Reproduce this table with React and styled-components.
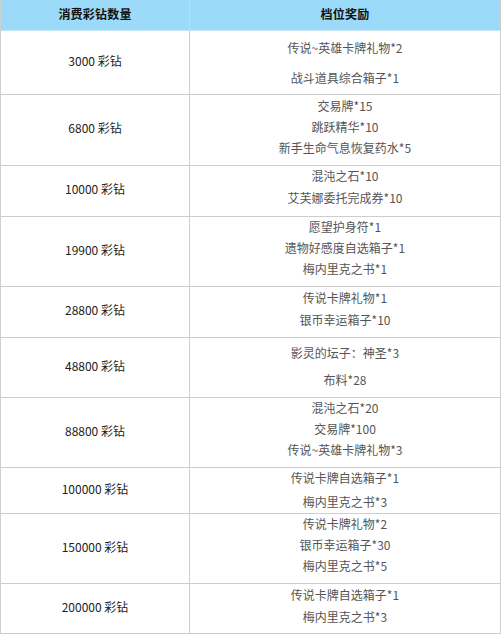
import React from 'react';
import styled, {createGlobalStyle} from 'styled-components';

const GlobalStyle = createGlobalStyle`
    html, body {
        margin: 0;
        padding: 0;
        background: #FFFFFF;
    }
    body {
        font-family: "Noto Sans CJK SC", "Noto Sans", sans-serif;
        font-size: 12px;
    }
`;

const Table = styled.div`
    width: 501px;
    box-sizing: border-box;
    border-left: 1px solid #cfcfcf;
    border-right: 1px solid #cfcfcf;
`;

const HeaderRow = styled.div`
    display: grid;
    grid-template-columns: 189px 1fr;
    height: 31px;
    background: #9bdaf8;
    border-bottom: 1px solid #c4e6f5;
    box-sizing: border-box;
`;

const HeaderCell = styled.div`
    display: flex;
    align-items: center;
    justify-content: center;
    padding-bottom: 3px;
    font-weight: 700;
    color: #111;
    letter-spacing: 0.2px;
    border-right: ${p => p.$divider ? '1px solid #b3e2f7' : 'none'};
`;

const Row = styled.div`
    display: grid;
    grid-template-columns: 189px 1fr;
    box-sizing: border-box;
    border-bottom: 1px solid #cdcdcd;
`;

const AmountCell = styled.div`
    display: flex;
    align-items: center;
    justify-content: center;
    padding-bottom: 5px;
    color: #222;
    border-right: 1px solid #cdcdcd;
`;

const RewardCell = styled.div`
    display: flex;
    flex-direction: column;
    align-items: center;
    color: #555;
`;

const Item = styled.div`
    line-height: 20px;
    white-space: nowrap;
`;

const rows = [
    {amount: '3000', h: 64, pt: 7, gap: 10, items: ['传说~英雄卡牌礼物*2', '战斗道具综合箱子*1']},
    {amount: '6800', h: 71, pt: 1, gap: 1, items: ['交易牌*15', '跳跃精华*10', '新手生命气息恢复药水*5']},
    {amount: '10000', h: 51, pt: 0, gap: 2, items: ['混沌之石*10', '艾芙娜委托完成券*10']},
    {amount: '19900', h: 70, pt: 0, gap: 1, items: ['愿望护身符*1', '遗物好感度自选箱子*1', '梅内里克之书*1']},
    {amount: '28800', h: 51, pt: 1, gap: 2, items: ['传说卡牌礼物*1', '银币幸运箱子*10']},
    {amount: '48800', h: 60, pt: 5, gap: 7, items: ['影灵的坛子：神圣*3', '布料*28']},
    {amount: '88800', h: 70, pt: 0, gap: 1, items: ['混沌之石*20', '交易牌*100', '传说~英雄卡牌礼物*3']},
    {amount: '100000', h: 46, pt: 0, gap: 4, items: ['传说卡牌自选箱子*1', '梅内里克之书*3']},
    {amount: '150000', h: 70, pt: 0, gap: 1, items: ['传说卡牌礼物*2', '银币幸运箱子*30', '梅内里克之书*5']},
    {amount: '200000', h: 50, pt: 1, gap: 2, items: ['传说卡牌自选箱子*1', '梅内里克之书*3']},
];

const App = () => {
    return (
        <>
            <GlobalStyle/>
            <Table>
                <HeaderRow>
                    <HeaderCell $divider>消费彩钻数量</HeaderCell>
                    <HeaderCell>档位奖励</HeaderCell>
                </HeaderRow>
                {rows.map(row => (
                    <Row key={row.amount} style={{height: row.h}}>
                        <AmountCell>{row.amount} 彩钻</AmountCell>
                        <RewardCell style={{paddingTop: row.pt, gap: row.gap}}>
                            {row.items.map(item => (
                                <Item key={item}>{item}</Item>
                            ))}
                        </RewardCell>
                    </Row>
                ))}
            </Table>
        </>
    );
};

export default App;
